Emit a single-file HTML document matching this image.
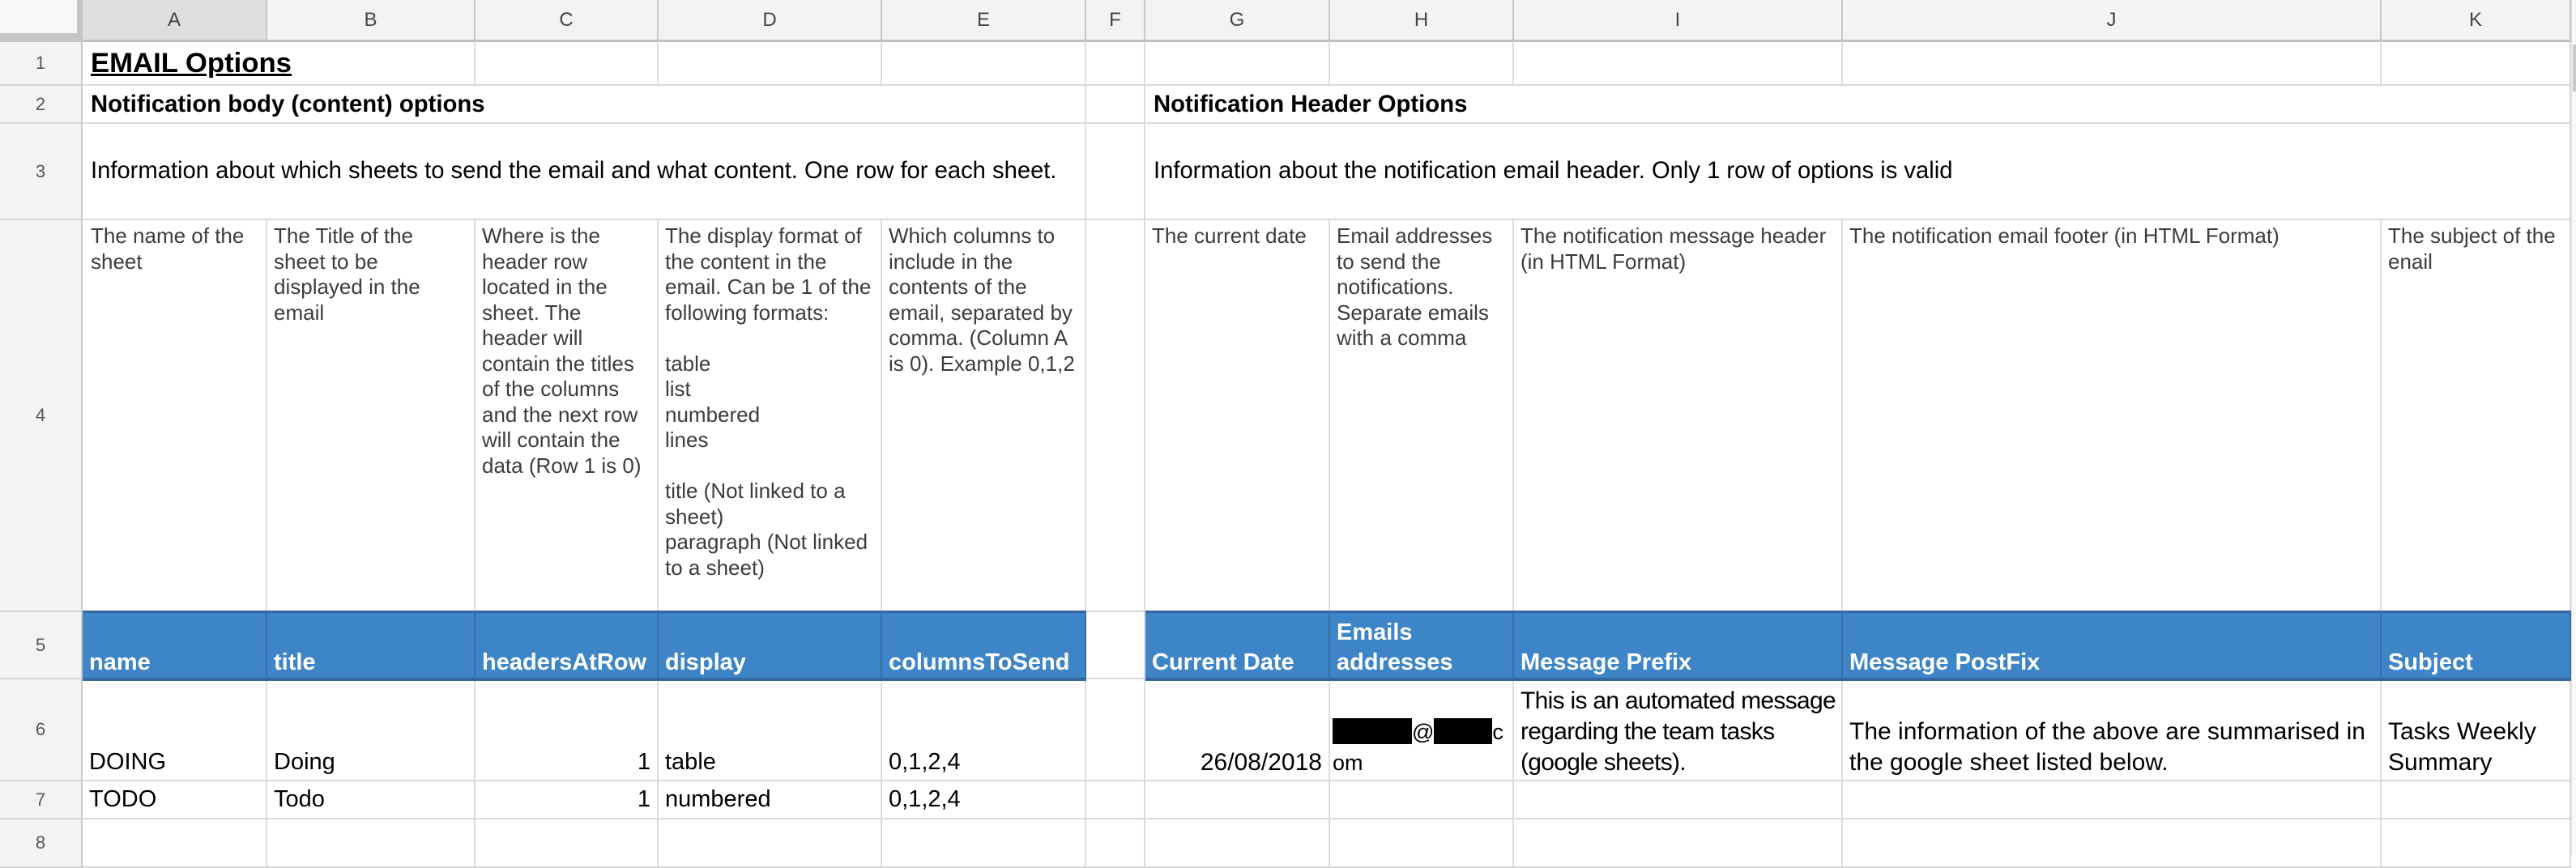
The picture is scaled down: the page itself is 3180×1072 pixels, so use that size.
<!DOCTYPE html>
<html><head><meta charset="utf-8"><style>
*{box-sizing:border-box;margin:0;padding:0}
body{width:3180px;height:1056px;overflow:hidden;background:#fff;position:relative;font-family:"Liberation Sans",Arial,sans-serif}
.c{position:absolute;border-right:2px solid #dcdcdc;border-bottom:2px solid #d9d9d9;background:#fff;overflow:hidden;white-space:nowrap;display:flex;padding:0 8px;color:#000}
.h{position:absolute;background:#f3f3f3;border-right:2px solid #c8c8c8;border-bottom:3px solid #c0c0c0;display:flex;align-items:center;justify-content:center;font-size:24px;color:#444}
.r{position:absolute;left:0;width:102px;background:#f3f3f3;border-right:2px solid #c8c8c8;border-bottom:2px solid #d4d4d4;display:flex;align-items:center;justify-content:center;font-size:22px;color:#555}
.mid{align-items:center}
.top{align-items:flex-start;padding-top:4px}
.bot{align-items:flex-end}
.d{font-size:26px;line-height:31.5px;color:#3c3c3c}
.b{background:#3d85c6;border-right:2px solid #3570aa;border-bottom:4px solid #3568a0;border-top:3px solid #3568a0;color:#fff;font-weight:bold;font-size:29px;line-height:37px;padding-bottom:0}
.v{font-size:29px;line-height:37px;padding-bottom:3px}
.k{font-size:30px;line-height:38px;padding-bottom:2px}
.rt{justify-content:flex-end}
.bx{display:inline-block;height:32px;background:#000;vertical-align:-6px}
</style></head><body>
<div style="position:absolute;left:0;top:0;width:102px;height:52px;background:#c4c4c4"></div>
<div style="position:absolute;left:0;top:0;width:95px;height:41px;background:#f8f8f8"></div>
<div class="h" style="left:102px;top:0;width:228px;height:52px;background:#dedede">A</div>
<div class="h" style="left:330px;top:0;width:257px;height:52px">B</div>
<div class="h" style="left:587px;top:0;width:226px;height:52px">C</div>
<div class="h" style="left:813px;top:0;width:276px;height:52px">D</div>
<div class="h" style="left:1089px;top:0;width:252px;height:52px">E</div>
<div class="h" style="left:1341px;top:0;width:73px;height:52px">F</div>
<div class="h" style="left:1414px;top:0;width:228px;height:52px">G</div>
<div class="h" style="left:1642px;top:0;width:227px;height:52px">H</div>
<div class="h" style="left:1869px;top:0;width:406px;height:52px">I</div>
<div class="h" style="left:2275px;top:0;width:665px;height:52px">J</div>
<div class="h" style="left:2940px;top:0;width:234px;height:52px">K</div>
<div class="r" style="top:52px;height:54px">1</div>
<div class="r" style="top:106px;height:47px">2</div>
<div class="r" style="top:153px;height:119px">3</div>
<div class="r" style="top:272px;height:484px">4</div>
<div class="r" style="top:756px;height:83px">5</div>
<div class="r" style="top:839px;height:126px">6</div>
<div class="r" style="top:965px;height:47px">7</div>
<div class="r" style="top:1012px;height:60px">8</div>

<div class="c mid" style="left:102px;top:52px;width:485px;height:54px;font-weight:bold;font-size:34.7px;text-decoration:underline;padding-left:10px">EMAIL Options</div>
<div class="c" style="left:587px;top:52px;width:226px;height:54px"></div>
<div class="c" style="left:813px;top:52px;width:276px;height:54px"></div>
<div class="c" style="left:1089px;top:52px;width:252px;height:54px"></div>
<div class="c" style="left:1341px;top:52px;width:73px;height:54px"></div>
<div class="c" style="left:1414px;top:52px;width:228px;height:54px"></div>
<div class="c" style="left:1642px;top:52px;width:227px;height:54px"></div>
<div class="c" style="left:1869px;top:52px;width:406px;height:54px"></div>
<div class="c" style="left:2275px;top:52px;width:665px;height:54px"></div>
<div class="c" style="left:2940px;top:52px;width:234px;height:54px"></div>
<div class="c mid" style="left:102px;top:106px;width:1239px;height:47px;font-weight:bold;font-size:29.3px;padding-left:10px">Notification body (content) options</div>
<div class="c" style="left:1341px;top:106px;width:73px;height:47px"></div>
<div class="c mid" style="left:1414px;top:106px;width:1760px;height:47px;font-weight:bold;font-size:29.3px;padding-left:10px">Notification Header Options</div>
<div class="c mid" style="left:102px;top:153px;width:1239px;height:119px;font-size:29.2px;padding-left:10px">Information about which sheets to send the email and what content. One row for each sheet.</div>
<div class="c" style="left:1341px;top:153px;width:73px;height:119px"></div>
<div class="c mid" style="left:1414px;top:153px;width:1760px;height:119px;font-size:29.2px;padding-left:10px">Information about the notification email header. Only 1 row of options is valid</div>
<div class="c top d" style="left:102px;top:272px;width:228px;height:484px;padding-left:10px">The name of the<br>sheet</div>
<div class="c top d" style="left:330px;top:272px;width:257px;height:484px">The Title of the<br>sheet to be<br>displayed in the<br>email</div>
<div class="c top d" style="left:587px;top:272px;width:226px;height:484px">Where is the<br>header row<br>located in the<br>sheet. The<br>header will<br>contain the titles<br>of the columns<br>and the next row<br>will contain the<br>data (Row 1 is 0)</div>
<div class="c top d" style="left:813px;top:272px;width:276px;height:484px">The display format of<br>the content in the<br>email. Can be 1 of the<br>following formats:<br><br>table<br>list<br>numbered<br>lines<br><br>title (Not linked to a<br>sheet)<br>paragraph (Not linked<br>to a sheet)</div>
<div class="c top d" style="left:1089px;top:272px;width:252px;height:484px">Which columns to<br>include in the<br>contents of the<br>email, separated by<br>comma. (Column A<br>is 0). Example 0,1,2</div>
<div class="c" style="left:1341px;top:272px;width:73px;height:484px"></div>
<div class="c top d" style="left:1414px;top:272px;width:228px;height:484px">The current date</div>
<div class="c top d" style="left:1642px;top:272px;width:227px;height:484px">Email addresses<br>to send the<br>notifications.<br>Separate emails<br>with a comma</div>
<div class="c top d" style="left:1869px;top:272px;width:406px;height:484px">The notification message header<br>(in HTML Format)</div>
<div class="c top d" style="left:2275px;top:272px;width:665px;height:484px">The notification email footer (in HTML Format)</div>
<div class="c top d" style="left:2940px;top:272px;width:234px;height:484px">The subject of the<br>enail</div>
<div class="c bot b" style="left:102px;top:754px;width:228px;height:87px">name</div>
<div class="c bot b" style="left:330px;top:754px;width:257px;height:87px">title</div>
<div class="c bot b" style="left:587px;top:754px;width:226px;height:87px">headersAtRow</div>
<div class="c bot b" style="left:813px;top:754px;width:276px;height:87px">display</div>
<div class="c bot b" style="left:1089px;top:754px;width:252px;height:87px">columnsToSend</div>
<div class="c" style="left:1341px;top:756px;width:73px;height:83px"></div>
<div class="c bot b" style="left:1414px;top:754px;width:228px;height:87px">Current Date</div>
<div class="c bot b" style="left:1642px;top:754px;width:227px;height:87px">Emails<br>addresses</div>
<div class="c bot b" style="left:1869px;top:754px;width:406px;height:87px">Message Prefix</div>
<div class="c bot b" style="left:2275px;top:754px;width:665px;height:87px">Message PostFix</div>
<div class="c bot b" style="left:2940px;top:754px;width:234px;height:87px">Subject</div>
<div class="c bot v" style="left:102px;top:841px;width:228px;height:124px">DOING</div>
<div class="c bot v" style="left:330px;top:841px;width:257px;height:124px">Doing</div>
<div class="c bot v rt" style="left:587px;top:841px;width:226px;height:124px">1</div>
<div class="c bot v" style="left:813px;top:841px;width:276px;height:124px">table</div>
<div class="c bot v" style="left:1089px;top:841px;width:252px;height:124px">0,1,2,4</div>
<div class="c" style="left:1341px;top:839px;width:73px;height:126px"></div>
<div class="c bot k rt" style="left:1414px;top:841px;width:228px;height:124px">26/08/2018</div>
<div class="c bot k" style="left:1642px;top:841px;width:227px;height:124px;padding-left:3px;font-size:27px"><div><span class="bx" style="width:98px"></span>@<span class="bx" style="width:72px"></span>c<br>om</div></div>
<div class="c bot k" style="left:1869px;top:841px;width:406px;height:124px;letter-spacing:-0.7px">This is an automated message<br>regarding the team tasks<br>(google sheets).</div>
<div class="c bot k" style="left:2275px;top:841px;width:665px;height:124px">The information of the above are summarised in<br>the google sheet listed below.</div>
<div class="c bot k" style="left:2940px;top:841px;width:234px;height:124px">Tasks Weekly<br>Summary</div>
<div class="c mid v" style="left:102px;top:965px;width:228px;height:47px;padding-bottom:0">TODO</div>
<div class="c mid v" style="left:330px;top:965px;width:257px;height:47px;padding-bottom:0">Todo</div>
<div class="c mid v rt" style="left:587px;top:965px;width:226px;height:47px;padding-bottom:0">1</div>
<div class="c mid v" style="left:813px;top:965px;width:276px;height:47px;padding-bottom:0">numbered</div>
<div class="c mid v" style="left:1089px;top:965px;width:252px;height:47px;padding-bottom:0">0,1,2,4</div>
<div class="c" style="left:1341px;top:965px;width:73px;height:47px"></div>
<div class="c" style="left:1414px;top:965px;width:228px;height:47px"></div>
<div class="c" style="left:1642px;top:965px;width:227px;height:47px"></div>
<div class="c" style="left:1869px;top:965px;width:406px;height:47px"></div>
<div class="c" style="left:2275px;top:965px;width:665px;height:47px"></div>
<div class="c" style="left:2940px;top:965px;width:234px;height:47px"></div>
<div class="c" style="left:102px;top:1012px;width:228px;height:60px"></div>
<div class="c" style="left:330px;top:1012px;width:257px;height:60px"></div>
<div class="c" style="left:587px;top:1012px;width:226px;height:60px"></div>
<div class="c" style="left:813px;top:1012px;width:276px;height:60px"></div>
<div class="c" style="left:1089px;top:1012px;width:252px;height:60px"></div>
<div class="c" style="left:1341px;top:1012px;width:73px;height:60px"></div>
<div class="c" style="left:1414px;top:1012px;width:228px;height:60px"></div>
<div class="c" style="left:1642px;top:1012px;width:227px;height:60px"></div>
<div class="c" style="left:1869px;top:1012px;width:406px;height:60px"></div>
<div class="c" style="left:2275px;top:1012px;width:665px;height:60px"></div>
<div class="c" style="left:2940px;top:1012px;width:234px;height:60px"></div>
<div style="position:absolute;left:3174px;top:0;width:6px;height:1056px;background:#f8f8f8;border-left:1px solid #e0e0e0"></div>
<div style="position:absolute;left:3176px;top:55px;width:4px;height:58px;background:#c8c8c8"></div>
</body></html>
